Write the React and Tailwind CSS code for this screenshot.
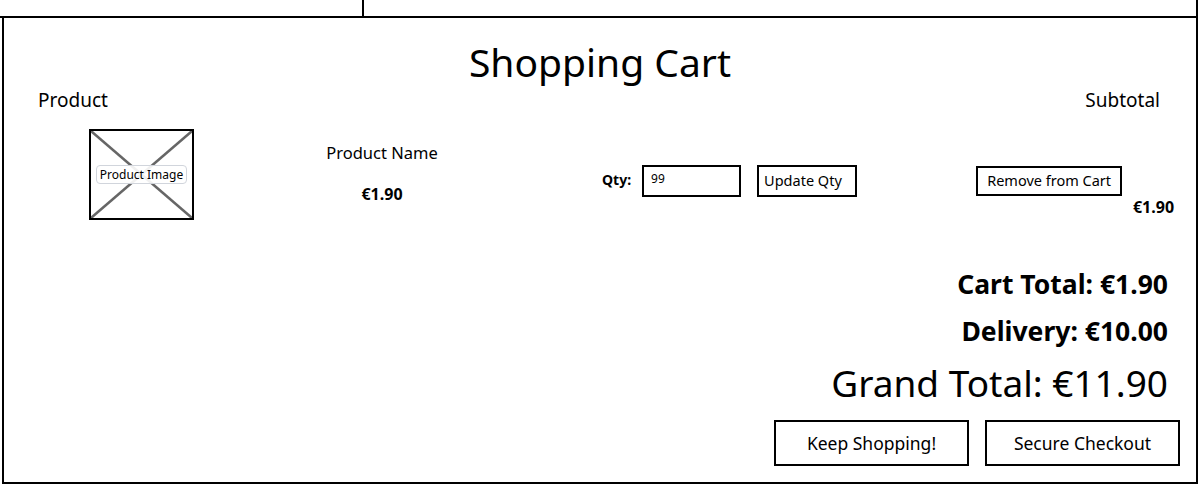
import React from "react";

const font = { fontFamily: '"Noto Sans", "Liberation Sans", sans-serif' };

const ImagePlaceholder = () => {
  return (
    <div className="relative w-[105px] h-[91px] border-2 border-black bg-white flex items-center justify-center">
      <svg className="absolute inset-0 w-full h-full" viewBox="0 0 101 87" preserveAspectRatio="none">
        <line x1="0" y1="0" x2="101" y2="87" stroke="#666" strokeWidth="2.5" />
        <line x1="101" y1="0" x2="0" y2="87" stroke="#666" strokeWidth="2.5" />
      </svg>
      <span className="relative bg-white/90 border border-gray-300 rounded px-[3px] text-[12px] leading-[17px] text-black">
        Product Image
      </span>
    </div>
  );
};

const App = () => {
  return (
    <div className="w-[1200px] h-[491px] bg-white text-black overflow-hidden" style={font}>
      {/* top strip */}
      <div className="flex h-[18px]">
        <div className="w-[364px] border-r-2 border-b-2 border-black" />
        <div className="w-[834px] border-r-2 border-b-2 border-black" />
      </div>

      {/* cart panel */}
      <div className="ml-[2px] w-[1196px] h-[466px] border-x-2 border-b-2 border-black flex flex-col">
        <h1 className="shrink-0 mt-[20px] text-center text-[39px] leading-[48px]">Shopping Cart</h1>

        <div className="shrink-0 flex justify-between pl-[34px] pr-[36px] mt-[2px] text-[19px] leading-[24px]">
          <span>Product</span>
          <span>Subtotal</span>
        </div>

        {/* line item */}
        <div className="shrink-0 flex items-start pl-[85px] mt-[17px]">
          <ImagePlaceholder />

          <div className="ml-[108px] w-[160px] flex flex-col items-center mt-[13px]">
            <span className="text-[16.5px] leading-[22px]">Product Name</span>
            <span className="mt-[20px] text-[16px] font-bold leading-[20px]">€1.90</span>
          </div>

          <div className="ml-[140px] mt-[36px] flex items-center">
            <span className="text-[14px] font-bold -mt-[3px]">Qty:</span>
            <div className="ml-[11px] w-[99px] h-[32px] border-2 border-black px-[7px] pt-[4px] text-[12px] leading-[16px]">
              99
            </div>
            <button className="ml-[16px] w-[100px] h-[32px] border-2 border-black text-[14.5px] text-left px-[5px]">
              Update Qty
            </button>
          </div>

          <div className="ml-[119px] mt-[37px] w-[198px] flex flex-col">
            <button className="self-start w-[146px] h-[30px] border-2 border-black text-[14.5px]">
              Remove from Cart
            </button>
            <span className="self-end mt-[1px] text-[16px] font-bold leading-[20px]">€1.90</span>
          </div>
        </div>

        {/* totals */}
        <div className="shrink-0 mt-[47px] pr-[28px] flex flex-col items-end">
          <span className="text-[26.5px] font-bold leading-[34px]">Cart Total: €1.90</span>
          <span className="mt-[13px] text-[26.5px] font-bold leading-[34px]">Delivery: €10.00</span>
          <span className="mt-[11px] text-[37px] leading-[48px]">Grand Total: €11.90</span>
        </div>

        <div className="shrink-0 mt-[13px] pr-[16px] flex justify-end gap-[16px]">
          <button className="w-[195px] h-[46px] shrink-0 border-2 border-black text-[17.5px]">Keep Shopping!</button>
          <button className="w-[195px] h-[46px] shrink-0 border-2 border-black text-[17.5px]">Secure Checkout</button>
        </div>
      </div>
    </div>
  );
};

export default App;
